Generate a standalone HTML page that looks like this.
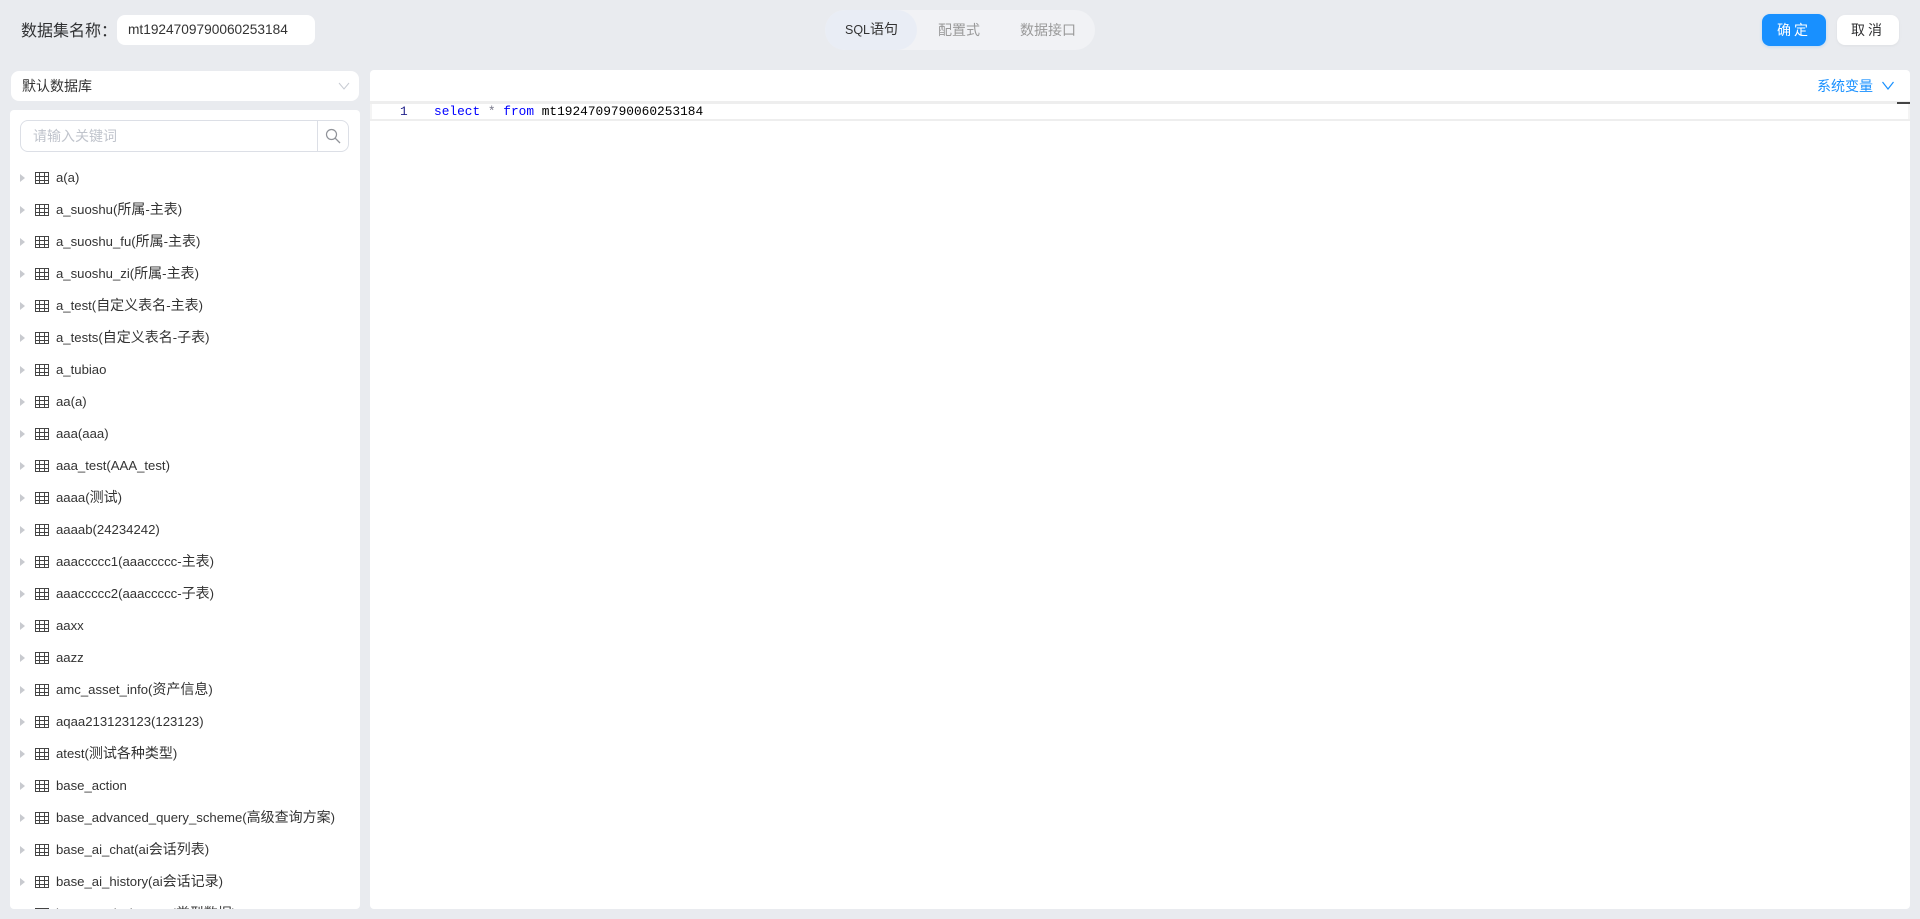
<!DOCTYPE html>
<html lang="zh"><head><meta charset="utf-8"><title>数据集</title>
<style>
*{box-sizing:border-box}
html,body{margin:0;padding:0;width:1920px;height:919px;overflow:hidden;background:#e9ebef;font-family:"Liberation Sans","Noto Sans CJK SC",sans-serif;color:#303133;font-size:14px}
.a{position:absolute}
.tree{position:absolute;left:10px;top:110px;width:350px;height:799px;background:#fff;border-radius:4px;overflow:hidden}
.row{position:absolute;left:0;height:32px;line-height:32px;width:350px;white-space:nowrap;color:#333;font-size:13.15px}
.row b{font-weight:normal;font-size:14px;line-height:1}
.row i{position:absolute;left:10px;top:12px;width:0;height:0;border-left:5px solid #c8cacf;border-top:4px solid transparent;border-bottom:4px solid transparent}
.row svg{position:absolute;left:25px;top:10px}
.row span{position:absolute;left:46px;top:0}
</style></head><body>
<div class="a" style="left:21px;top:20px;font-size:16px;line-height:24px;color:#303133">数据集名称：</div>
<div class="a" style="left:117px;top:15px;width:198px;height:30px;background:#fff;border-radius:8px;line-height:30px;padding-left:11px;font-size:13.7px;color:#333">mt1924709790060253184</div>

<div class="a" style="left:825px;top:10px;width:270px;height:40px;background:#f1f2f5;border-radius:20px"></div>
<div class="a" style="left:825px;top:10px;width:92px;height:40px;background:#e9edf5;border-radius:20px"></div>
<div class="a" style="left:845px;top:10px;line-height:40px;font-size:12.5px;color:#333">SQL<span style="font-size:14px;line-height:1">语句</span></div>
<div class="a" style="left:938px;top:10px;line-height:40px;color:#999">配置式</div>
<div class="a" style="left:1020px;top:10px;line-height:40px;color:#999">数据接口</div>

<div class="a" style="left:1762px;top:14px;width:64px;height:32px;background:#1890ff;border-radius:8px;color:#fff;text-align:center;line-height:32px;letter-spacing:3px;box-shadow:0 1px 3px rgba(24,144,255,.2)">确定</div>
<div class="a" style="left:1837px;top:15px;width:62px;height:30px;background:#fff;border-radius:8px;color:#303133;text-align:center;line-height:30px;letter-spacing:3px;box-shadow:0 1px 3px rgba(0,0,0,.05)">取消</div>

<div class="a" style="left:11px;top:71px;width:348px;height:30px;background:#fff;border-radius:8px;line-height:30px;padding-left:11px;color:#333">默认数据库
<svg class="a" style="left:327px;top:10px" width="12" height="10" viewBox="0 0 12 10"><path d="M1 2l5 6 5-6" fill="none" stroke="#c8ccd3" stroke-width="1"/></svg></div>

<div class="tree">
<div class="a" style="left:10px;top:10px;width:329px;height:32px;border:1px solid #dcdfe6;border-radius:8px;background:#fff"></div>
<div class="a" style="left:307px;top:10px;width:1px;height:32px;background:#dcdfe6"></div>
<div class="a" style="left:23px;top:10px;line-height:32px;color:#c0c4cc">请输入关键词</div>
<svg class="a" style="left:315px;top:18px" width="16" height="16" viewBox="0 0 16 16"><circle cx="6.500" cy="6.500" r="5" fill="none" stroke="#909399" stroke-width="1.200"/><path d="M10.200 10.200L15 15" stroke="#909399" stroke-width="1.300"/></svg>
<svg width="0" height="0" style="position:absolute"><defs><g id="g"><rect x=".5" y=".5" width="13" height="11" fill="none" stroke="#444"/><path d="M.5 4.500h13M.5 8.500h13M4.500 .5v11M9.500 .5v11" stroke="#444" fill="none"/></g></defs></svg>
<div class="row" style="top:52px"><i></i><svg width="14" height="13"><use href="#g"/></svg><span>a(a)</span></div>
<div class="row" style="top:84px"><i></i><svg width="14" height="13"><use href="#g"/></svg><span>a_suoshu(<b>所属</b>-<b>主表</b>)</span></div>
<div class="row" style="top:116px"><i></i><svg width="14" height="13"><use href="#g"/></svg><span>a_suoshu_fu(<b>所属</b>-<b>主表</b>)</span></div>
<div class="row" style="top:148px"><i></i><svg width="14" height="13"><use href="#g"/></svg><span>a_suoshu_zi(<b>所属</b>-<b>主表</b>)</span></div>
<div class="row" style="top:180px"><i></i><svg width="14" height="13"><use href="#g"/></svg><span>a_test(<b>自定义表名</b>-<b>主表</b>)</span></div>
<div class="row" style="top:212px"><i></i><svg width="14" height="13"><use href="#g"/></svg><span>a_tests(<b>自定义表名</b>-<b>子表</b>)</span></div>
<div class="row" style="top:244px"><i></i><svg width="14" height="13"><use href="#g"/></svg><span>a_tubiao</span></div>
<div class="row" style="top:276px"><i></i><svg width="14" height="13"><use href="#g"/></svg><span>aa(a)</span></div>
<div class="row" style="top:308px"><i></i><svg width="14" height="13"><use href="#g"/></svg><span>aaa(aaa)</span></div>
<div class="row" style="top:340px"><i></i><svg width="14" height="13"><use href="#g"/></svg><span>aaa_test(AAA_test)</span></div>
<div class="row" style="top:372px"><i></i><svg width="14" height="13"><use href="#g"/></svg><span>aaaa(<b>测试</b>)</span></div>
<div class="row" style="top:404px"><i></i><svg width="14" height="13"><use href="#g"/></svg><span>aaaab(24234242)</span></div>
<div class="row" style="top:436px"><i></i><svg width="14" height="13"><use href="#g"/></svg><span>aaaccccc1(aaaccccc-<b>主表</b>)</span></div>
<div class="row" style="top:468px"><i></i><svg width="14" height="13"><use href="#g"/></svg><span>aaaccccc2(aaaccccc-<b>子表</b>)</span></div>
<div class="row" style="top:500px"><i></i><svg width="14" height="13"><use href="#g"/></svg><span>aaxx</span></div>
<div class="row" style="top:532px"><i></i><svg width="14" height="13"><use href="#g"/></svg><span>aazz</span></div>
<div class="row" style="top:564px"><i></i><svg width="14" height="13"><use href="#g"/></svg><span>amc_asset_info(<b>资产信息</b>)</span></div>
<div class="row" style="top:596px"><i></i><svg width="14" height="13"><use href="#g"/></svg><span>aqaa213123123(123123)</span></div>
<div class="row" style="top:628px"><i></i><svg width="14" height="13"><use href="#g"/></svg><span>atest(<b>测试各种类型</b>)</span></div>
<div class="row" style="top:660px"><i></i><svg width="14" height="13"><use href="#g"/></svg><span>base_action</span></div>
<div class="row" style="top:692px"><i></i><svg width="14" height="13"><use href="#g"/></svg><span>base_advanced_query_scheme(<b>高级查询方案</b>)</span></div>
<div class="row" style="top:724px"><i></i><svg width="14" height="13"><use href="#g"/></svg><span>base_ai_chat(ai<b>会话列表</b>)</span></div>
<div class="row" style="top:756px"><i></i><svg width="14" height="13"><use href="#g"/></svg><span>base_ai_history(ai<b>会话记录</b>)</span></div>
<div class="row" style="top:788px"><i></i><svg width="14" height="13"><use href="#g"/></svg><span>base_analysis_type(<b>类型数据</b>)</span></div>
</div>

<div class="a" style="left:370px;top:70px;width:1540px;height:839px;background:#fff;border-radius:4px"></div>
<div class="a" style="left:370px;top:101px;width:1540px;height:3px;background:#eeeeee"></div>
<div class="a" style="left:370px;top:104px;width:2px;height:15px;background:#f4f4f4"></div>
<div class="a" style="left:370px;top:119px;width:1540px;height:2px;background:#eeeeee"></div>
<div class="a" style="left:1897px;top:102px;width:13px;height:2px;background:#444"></div>
<div class="a" style="left:1908px;top:104px;width:2px;height:15px;background:#f4f4f4"></div>
<div class="a" style="left:1817px;top:75px;line-height:22px;color:#1890ff">系统变量</div>
<svg class="a" style="left:1881px;top:80px" width="14" height="11" viewBox="0 0 14 11"><path d="M1.500 2L7 9l5.500-7" fill="none" stroke="#1890ff" stroke-width="1.200"/></svg>
<div class="a" style="left:400px;top:104px;line-height:15px;font-family:'Liberation Mono',monospace;font-size:12.82px;color:#23238c">1</div>
<div class="a" style="left:434px;top:104px;line-height:15px;font-family:'Liberation Mono',monospace;font-size:12.82px;color:#000;white-space:pre"><span style="color:#00f">select</span> <span style="color:#778">*</span> <span style="color:#00f">from</span> mt1924709790060253184</div>
</body></html>
